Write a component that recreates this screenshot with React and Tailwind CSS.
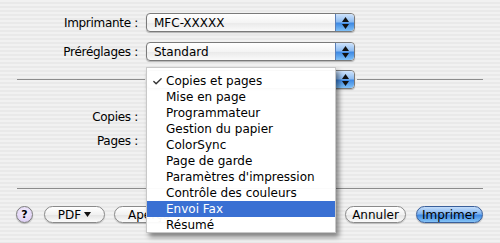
import { Check } from "lucide-react";

const items = [
  "Copies et pages",
  "Mise en page",
  "Programmateur",
  "Gestion du papier",
  "ColorSync",
  "Page de garde",
  "Paramètres d'impression",
  "Contrôle des couleurs",
  "Envoi Fax",
  "Résumé",
];

function Arrows() {
  return (
    <div className="w-[19px] h-full rounded-r-[4px] border-l border-[#5a7fb8] bg-[linear-gradient(#cfe3fb_0%,#8fbdf2_45%,#3f8ae4_55%,#7fc0f7_100%)] flex flex-col items-center justify-center gap-[2px]">
      <svg width="7" height="5" viewBox="0 0 7 5">
        <path d="M3.5 0 L7 5 L0 5 Z" fill="#111" />
      </svg>
      <svg width="7" height="5" viewBox="0 0 7 5">
        <path d="M0 0 L7 0 L3.5 5 Z" fill="#111" />
      </svg>
    </div>
  );
}

function Popup({ value }) {
  return (
    <div className="w-[209px] h-[19px] flex rounded-[4px] border border-[#7a7a7a] shadow-[0_1px_1px_rgba(0,0,0,0.25)] bg-[linear-gradient(#ffffff,#f4f4f4_50%,#e9e9e9_51%,#fafafa)]">
      <div className="flex-1 pl-[7px] flex items-center text-[12px] text-black leading-none">{value}</div>
      <Arrows />
    </div>
  );
}

function Pill({ children, className = "" }) {
  return (
    <div
      className={`h-[17px] rounded-full border border-[#8a8a8a] bg-[linear-gradient(#ffffff,#f1f1f1_50%,#e3e3e3_51%,#fbfbfb)] shadow-[0_1px_1px_rgba(0,0,0,0.2)] flex items-center justify-center text-[12px] leading-none text-black ${className}`}
    >
      {children}
    </div>
  );
}

export default function App() {
  return (
    <div
      className="w-[500px] h-[243px] relative overflow-hidden bg-[repeating-linear-gradient(#f1f1f1_0px,#f1f1f1_2px,#e9e9e9_2px,#e9e9e9_4px)] text-black"
      style={{ fontFamily: '"DejaVu Sans", sans-serif' }}
    >
      <div className="flex flex-col pt-[13px]">
        {/* Imprimante / Préréglages */}
        <div className="flex items-center h-[19px]">
          <div className="w-[139px] text-right text-[12px] tracking-[-0.3px] pr-[1px]">Imprimante :</div>
          <div className="ml-[7px]">
            <Popup value="MFC-XXXXX" />
          </div>
        </div>
        <div className="flex items-center h-[19px] mt-[10px]">
          <div className="w-[139px] text-right text-[12px] tracking-[-0.3px] pr-[1px]">Préréglages :</div>
          <div className="ml-[7px]">
            <Popup value="Standard" />
          </div>
        </div>

        {/* panel selector with separator (its label is hidden by the open menu) */}
        <div className="flex items-center h-[19px] mt-[9px]">
          <div className="ml-[17px] w-[128px] h-px bg-[#8c8c8c]" />
          <div className="ml-[1px]">
            <Popup value="" />
          </div>
          <div className="ml-[2px] w-[126px] h-px bg-[#8c8c8c]" />
        </div>

        {/* panel contents */}
        <div className="flex items-center h-[16px] mt-[20px]">
          <div className="w-[139px] text-right text-[12px] tracking-[-0.3px] pr-[1px]">Copies :</div>
        </div>
        <div className="flex items-center h-[16px] mt-[8px]">
          <div className="w-[139px] text-right text-[12px] tracking-[-0.3px] pr-[1px]">Pages :</div>
        </div>

        {/* bottom separator */}
        <div className="ml-[17px] w-[466px] h-px bg-[#8c8c8c] mt-[39px]" />

        {/* buttons */}
        <div className="flex items-center h-[17px] mt-[17px] pl-[16px] pr-[17px]">
          <div className="w-[17px] h-[17px] rounded-full border border-[#7d7d7d] bg-[radial-gradient(circle_at_50%_35%,#f4eefd,#d8c8f2)] shadow-[0_1px_1px_rgba(0,0,0,0.25)] flex items-center justify-center text-[11px] font-bold leading-none">
            ?
          </div>
          <Pill className="ml-[11px] w-[61px] gap-[3px]">
            PDF
            <svg width="7" height="5" viewBox="0 0 7 5">
              <path d="M0 0 L7 0 L3.5 5 Z" fill="#111" />
            </svg>
          </Pill>
          <Pill className="ml-[9px] w-[72px] justify-start pl-[13px]">Aperçu</Pill>
          <div className="flex-1" />
          <Pill className="w-[61px]">Annuler</Pill>
          <div className="ml-[10px] w-[67px] h-[17px] rounded-full border border-[#3a5f9a] bg-[linear-gradient(#c4ddfa,#7fb3ef_45%,#3d88e3_55%,#86c4f6)] shadow-[0_1px_1px_rgba(0,0,0,0.25)] flex items-center justify-center text-[12px] leading-none">
            Imprimer
          </div>
        </div>
      </div>

      {/* open popup menu */}
      <div className="absolute left-[146px] top-[67px] w-[190px] h-[166px] bg-white/[0.96] border border-[#c8c8c8] shadow-[3px_4px_5px_rgba(0,0,0,0.45)] pt-[5px] text-[12px]">
        {items.map((label, i) => (
          <div
            key={label}
            className={`h-[16px] flex items-center pl-[19px] relative leading-none ${
              label === "Envoi Fax" ? "bg-[#3a70d3] text-white" : "text-black"
            }`}
          >
            {i === 0 && (
              <Check className="absolute left-[5px] top-[3px] w-[11px] h-[11px] text-[#333]" strokeWidth={3} />
            )}
            {label}
          </div>
        ))}
      </div>
    </div>
  );
}
